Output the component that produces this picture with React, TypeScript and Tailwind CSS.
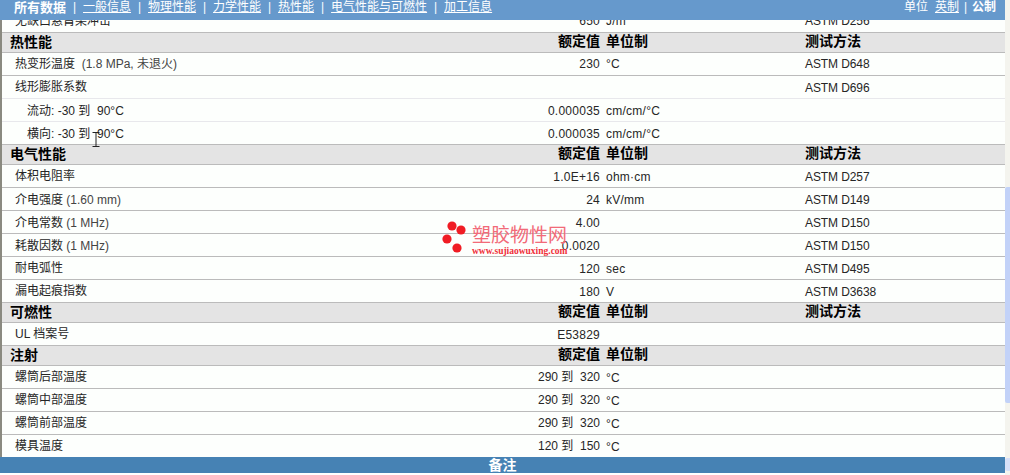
const navLinks = ["一般信息", "物理性能", "力学性能", "热性能", "电气性能与可燃性", "加工信息"];

type RowData = {
  name: string;
  note?: string;
  value?: string;
  unit?: string;
  method?: string;
  sub?: boolean;
  light?: boolean;
  last?: boolean;
  tight?: boolean;
  range?: boolean;
};

const Head = ({ title, method = true }: { title: string; method?: boolean }) => (
  <div className="flex h-[20px] items-center border-b border-[#bbbbbb] bg-[#e4e4e4] text-[14px] font-bold text-black">
    <div className="w-[400px] pl-[8px]">{title}</div>
    <div className="w-[198px] pb-[2px] text-right">额定值</div>
    <div className="w-[205px] pb-[2px] pl-[6px]">单位制</div>
    <div className="pb-[2px]">{method ? "测试方法" : ""}</div>
  </div>
);

const Row = ({ name, note, value, unit, method, sub, light, last, tight, range }: RowData) => (
  <div
    className={`flex items-center bg-[#fdfffd] ${last ? "h-[22px]" : "h-[23px] border-b"} ${
      light ? "border-[#e8e8ec]" : "border-[#bbbbbb]"
    }`}
  >
    <div
      className={`w-[400px] whitespace-pre ${sub ? "pl-[25px]" : "pl-[13px]"} ${
        (sub || note) && !tight ? "pt-[1px]" : ""
      }`}
    >
      {name}
      {note && <span className="text-[#444444]">{note}</span>}
    </div>
    <div
      className={`w-[198px] text-right whitespace-pre ${
        range ? "" : "tracking-[0.25px]"
      } ${tight || range ? "" : "pt-[1px]"}`}
    >
      {value}
    </div>
    <div className={`w-[205px] pl-[6px] tracking-[0.25px] ${tight ? "" : "pt-[1px]"}`}>{unit}</div>
    <div className={`tracking-[-0.1px] ${tight ? "" : "pt-[1px]"}`}>{method}</div>
  </div>
);

export default function App() {
  return (
    <div className="relative flex h-[475px] w-[1010px] overflow-hidden bg-white font-['Liberation_Sans','Noto_Sans_CJK_SC',sans-serif] text-[12px] text-[#262626]">
      <div className="w-[1005px]">
        <nav className="relative z-10 flex h-[20px] items-start bg-[#6699cc] pr-[9px] pl-[14px] leading-[15px] text-white">
          <b className="text-[13px]">所有数据</b>
          {navLinks.map((link) => (
            <span key={link} className="flex">
              <span className="w-[17px] text-center">|</span>
              <a className="underline">{link}</a>
            </span>
          ))}
          <span className="ml-auto">单位</span>
          <a className="ml-[7px] underline">英制</a>
          <span className="ml-[5px] w-[8px]">|</span>
          <b>公制</b>
        </nav>

        <div className="-mt-[10px] border-l-2 border-[#8a8a80]">
          <Row name="无缺口悬臂梁冲击" value="650" unit="J/m" method="ASTM D256" tight />
          <Head title="热性能" />
          <Row name="热变形温度" note="  (1.8 MPa, 未退火)" value="230" unit="°C" method="ASTM D648" tight />
          <Row name="线形膨胀系数" method="ASTM D696" light />
          <Row name="流动: -30 到  90°C" value="0.000035" unit="cm/cm/°C" sub light />
          <Row name="横向: -30 到  90°C" value="0.000035" unit="cm/cm/°C" sub />
          <Head title="电气性能" />
          <Row name="体积电阻率" value="1.0E+16" unit="ohm·cm" method="ASTM D257" />
          <Row name="介电强度" note=" (1.60 mm)" value="24" unit="kV/mm" method="ASTM D149" />
          <Row name="介电常数" note=" (1 MHz)" value="4.00" method="ASTM D150" />
          <Row name="耗散因数" note=" (1 MHz)" value="0.0020" method="ASTM D150" />
          <Row name="耐电弧性" value="120" unit="sec" method="ASTM D495" />
          <Row name="漏电起痕指数" value="180" unit="V" method="ASTM D3638" />
          <Head title="可燃性" />
          <Row name="UL 档案号" value="E53829" />
          <Head title="注射" method={false} />
          <Row name="螺筒后部温度" value="290 到  320" unit="°C" range />
          <Row name="螺筒中部温度" value="290 到  320" unit="°C" range />
          <Row name="螺筒前部温度" value="290 到  320" unit="°C" range />
          <Row name="模具温度" value="120 到  150" unit="°C" range last />
        </div>
        <div className="flex h-[16px] items-center justify-center bg-[#4682b4] text-[14px] font-bold text-white">
          备注
        </div>
      </div>

      {/* scrollbar strip */}
      <div className="flex w-[5px] flex-col bg-[#f4f4ee]">
        <div className="h-[187px]" />
        <div className="h-[216px] rounded-l-[2px] bg-[#c2d2f8]" />
        <div className="h-[55px]" />
        <div className="h-[13px] rounded-l-[2px] bg-[#d6e0f8]" />
      </div>

      {/* text cursor */}
      <svg className="absolute top-[132px] left-[92px]" width="8" height="16" viewBox="0 0 8 16">
        <path d="M0.5 0.5h7M0.5 14.5h7M4 1v13" stroke="#222" strokeWidth="1" fill="none" />
      </svg>

      {/* watermark */}
      <div className="absolute top-[221px] left-[442px] z-20 flex">
        <svg width="30" height="33" viewBox="0 0 30 33">
          <circle cx="10" cy="5" r="4.6" fill="#f01c24" />
          <circle cx="19" cy="9" r="4.6" fill="#f01c24" />
          <circle cx="5" cy="18" r="4.6" fill="#f01c24" />
          <circle cx="15" cy="27" r="4.6" fill="#f01c24" />
        </svg>
        <div className="flex flex-col pt-[2px]">
          <span className="h-[23px] text-[19px] leading-[25px] text-[#f26a78]">塑胶物性网</span>
          <span className="text-[9.5px] leading-[10px] font-bold text-[#f0303a] font-['Liberation_Serif',serif]">
            www.sujiaowuxing.com
          </span>
        </div>
      </div>
    </div>
  );
}
